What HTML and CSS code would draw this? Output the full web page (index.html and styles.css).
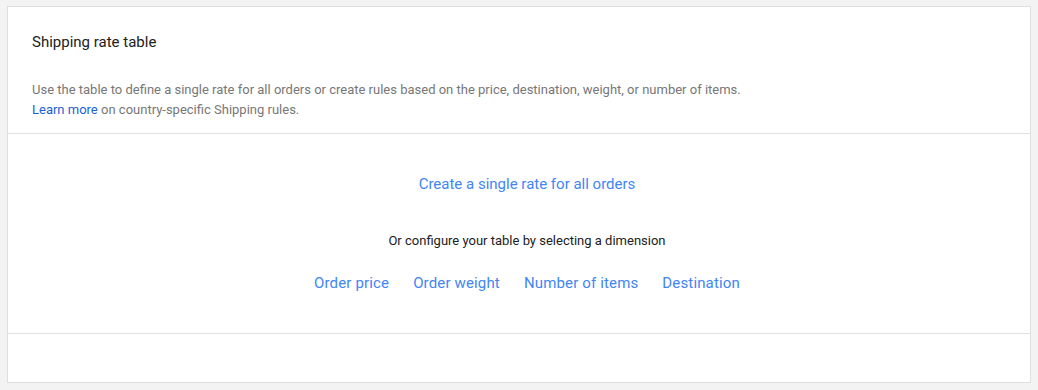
FILE: index.html
```html
<!DOCTYPE html>
<html>
<head>
<meta charset="utf-8">
<link rel="stylesheet" href="styles.css">
</head>
<body>
<div class="card">
  <div class="header">
    <div class="title">Shipping rate table</div>
    <div class="desc">Use the table to define a single rate for all orders or create rules based on the price, destination, weight, or number of items.<br><a class="link" href="#">Learn more</a> on country-specific Shipping rules.</div>
  </div>
  <div class="body">
    <a class="action big" href="#">Create a single rate for all orders</a>
    <div class="hint">Or configure your table by selecting a dimension</div>
    <div class="dims">
      <a class="action" href="#">Order price</a>
      <a class="action" href="#">Order weight</a>
      <a class="action" href="#">Number of items</a>
      <a class="action" href="#">Destination</a>
    </div>
  </div>
  <div class="footer"></div>
</div>
</body>
</html>
```
FILE: styles.css
```css
html, body {
  margin: 0;
  padding: 0;
  background: #f3f3f3;
}
body {
  padding: 6px 0 0 7px;
  font-family: Roboto, "Liberation Sans", sans-serif;
}
.card {
  width: 1022px;
  height: 375px;
  background: #fff;
  border: 1px solid #dfdfdf;
  display: flex;
  flex-direction: column;
}
.header {
  padding: 25px 24px 13px 24px;
  border-bottom: 1px solid #e0e0e0;
}
.title {
  font-size: 15px;
  line-height: 20px;
  color: #212121;
}
.desc {
  margin-top: 28px;
  font-size: 13px;
  line-height: 20px;
  color: #777;
}
.link {
  color: #1a62d6;
  text-decoration: none;
}
.body {
  height: 199px;
  border-bottom: 1px solid #e0e0e0;
  display: flex;
  flex-direction: column;
  align-items: center;
  padding-left: 16px;
}
.action {
  color: #4285f4;
  text-decoration: none;
  font-size: 15px;
  line-height: 20px;
}
.big {
  margin-top: 40px;
}
.hint {
  margin-top: 37px;
  font-size: 13px;
  line-height: 20px;
  color: #212121;
}
.dims {
  margin-top: 22px;
  display: flex;
  gap: 24px;
}
.dims .action {
  letter-spacing: 0.15px;
}
.footer {
  flex: 1;
}
```
